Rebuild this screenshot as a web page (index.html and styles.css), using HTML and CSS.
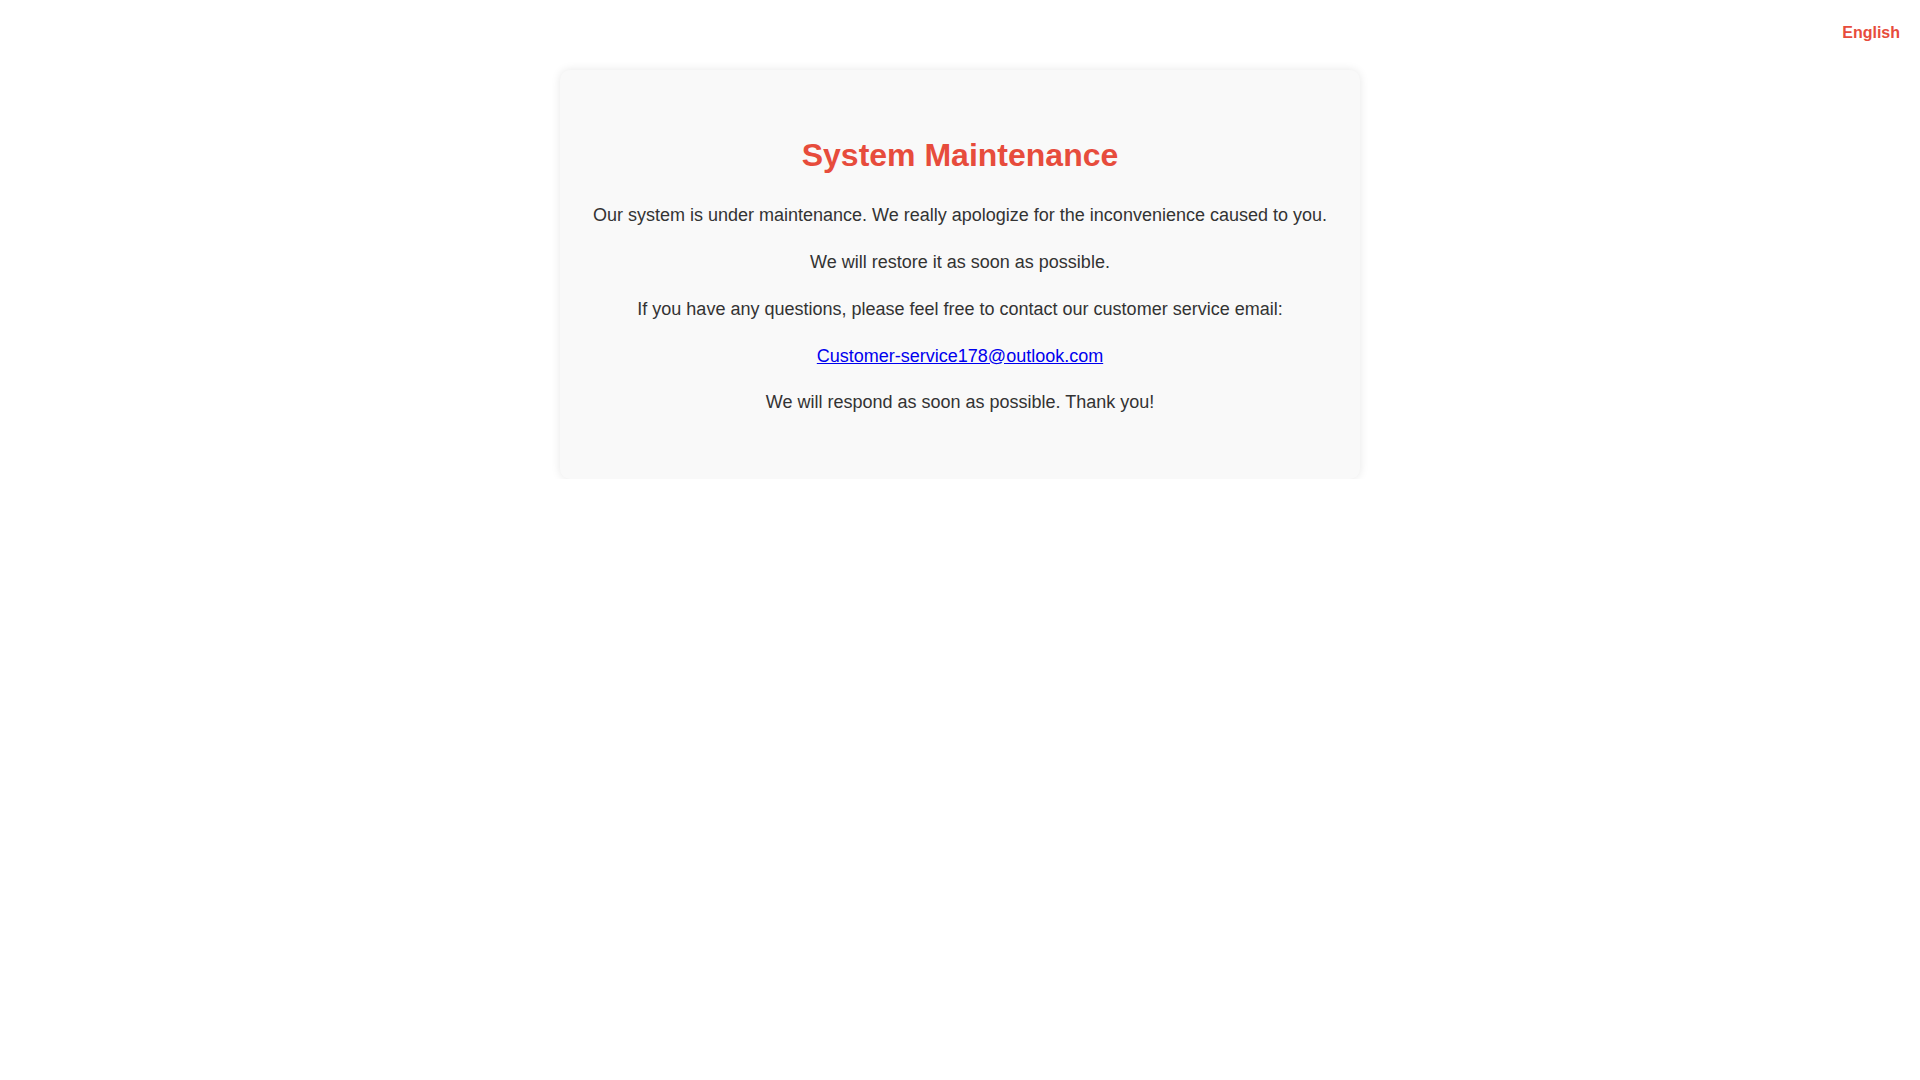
FILE: index.html
```html
<!DOCTYPE html>
<html lang="en">
<head>
<meta charset="utf-8">
<title>System Maintenance</title>
<link rel="stylesheet" href="styles.css">
</head>
<body>
<div class="lang">English</div>
<main class="card">
  <h1 class="title">System Maintenance</h1>
  <p>Our system is under maintenance. We really apologize for the inconvenience caused to you.</p>
  <p>We will restore it as soon as possible.</p>
  <p>If you have any questions, please feel free to contact our customer service email:</p>
  <p><a class="mail" href="mailto:Customer-service178@outlook.com">Customer-service178@outlook.com</a></p>
  <p>We will respond as soon as possible. Thank you!</p>
</main>
</body>
</html>
```
FILE: styles.css
```css
html, body {
  margin: 0;
  padding: 0;
  background: #ffffff;
}
body {
  font-family: "Liberation Sans", Arial, sans-serif;
  font-size: 18px;
  line-height: 1.6;
  color: #333333;
  padding-top: 70px;
}
.lang {
  position: absolute;
  top: 20px;
  right: 20px;
  font-size: 16px;
  font-weight: bold;
  color: #e74c3c;
}
.card {
  display: block;
  width: 800px;
  box-sizing: border-box;
  margin: 0 auto;
  padding: 40px 20px 44px;
  background: #f9f9f9;
  border-radius: 10px;
  box-shadow: 0 0 10px rgba(0, 0, 0, 0.1);
  text-align: center;
}
.title {
  font-size: 32px;
  font-weight: bold;
  color: #e74c3c;
  margin: 20px 0;
  line-height: 1.6;
}
.card p {
  margin: 18px 0;
}
.mail {
  color: #0000ee;
  text-decoration: underline;
}
```
